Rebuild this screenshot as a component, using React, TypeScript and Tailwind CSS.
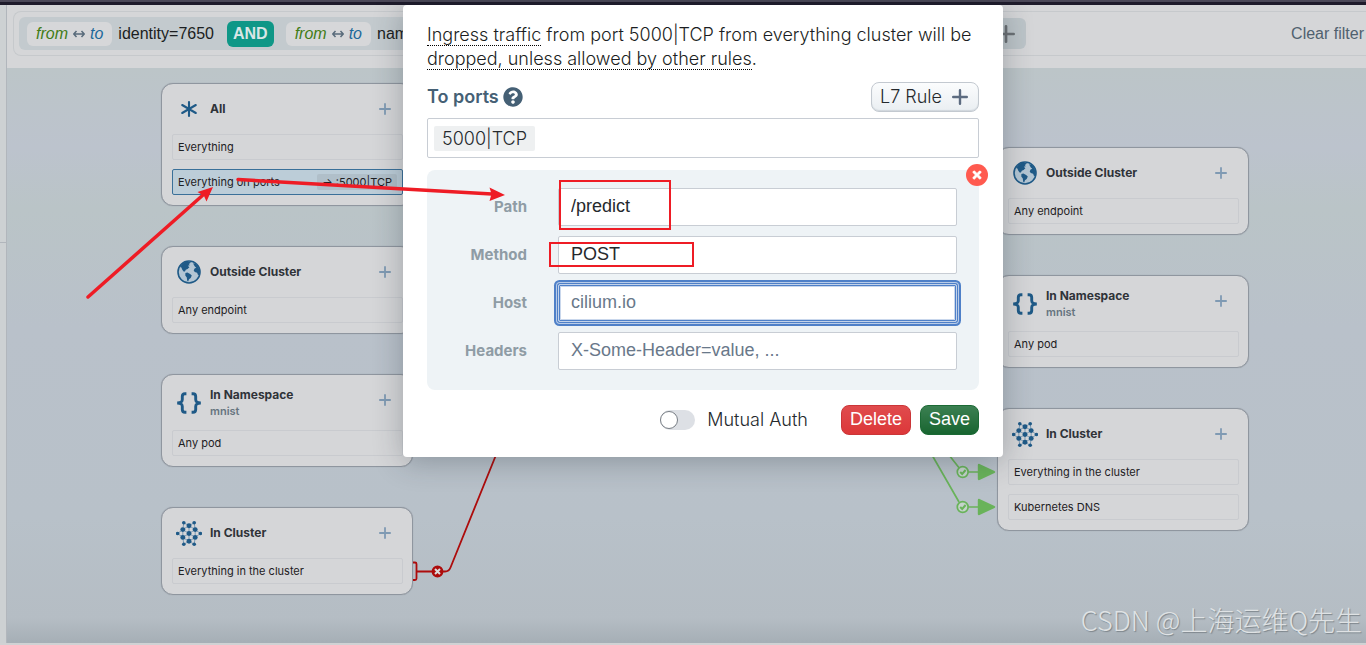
import type { ReactNode } from "react";
import { FaQuestionCircle, FaTimes } from "react-icons/fa";

const BLUE = "#1f5a87";

function Plus({ className }: { className: string }) {
  return (
    <svg viewBox="0 0 16 16" className={className} fill="none" stroke="currentColor" strokeWidth="2.4" strokeLinecap="round" aria-hidden="true">
      <path d="M8 1.2v13.6M1.2 8h13.6" />
    </svg>
  );
}

function AsteriskIcon() {
  return (
    <svg viewBox="0 0 26 26" className="size-[26px]" fill="none" stroke={BLUE} strokeWidth="2.1" strokeLinecap="round" aria-hidden="true">
      <path d="M13 6v14M6.2 9l13.6 8M19.8 9L6.2 17" />
    </svg>
  );
}

function GlobeIcon() {
  return (
    <svg viewBox="0 0 24 24" className="size-6" aria-hidden="true">
      <circle cx="12" cy="12" r="11" fill="#b3c6d4" stroke={BLUE} strokeWidth="1.6" />
      <path
        d="M4 5.400C5.600 3.300 7.800 1.800 10.400 1.300L14 2.400l-2.200 1.500 1 1.300-2 .6 1.600 1.400-1.800 1.900-1.800.6-.9 1.700-1.300.2-1.300-1.800-.9-2.200L3 7z"
        fill={BLUE}
      />
      <path d="M8.400 13l2-.4 2.700 1.400 1.700 1.500-1.100 2.400-1.700 1.300-.8 2.200-1-.6-.4-3.200-1.500-2.200z" fill={BLUE} />
      <path d="M16 3.200l3 .9 2.400 3.100L22.800 11l-.4 3.400-1.300.8-1-2.500-2.300-.6-1.100-1.700.9-1.900 1.700-.8-1.500-1.200z" fill={BLUE} />
    </svg>
  );
}

function BracesIcon() {
  return (
    <svg viewBox="0 0 26 26" className="size-[26px]" fill="none" stroke={BLUE} strokeWidth="2.9" aria-hidden="true">
      <path d="M10.400 3.700H9c-2.100 0-2.700 1-2.700 2.800v3c0 2-.8 3.100-5 3.500 4.200.4 5 1.500 5 3.500v3c0 1.800.6 2.800 2.700 2.800h1.400" />
      <path d="M15.600 3.700H17c2.100 0 2.700 1 2.700 2.800v3c0 2 .8 3.100 5 3.500-4.200.4-5 1.500-5 3.500v3c0 1.800-.6 2.800-2.700 2.800h-1.400" />
    </svg>
  );
}

const hubs = [[0, 0], [0, -24], [0, 24], [-19, -12], [19, -12], [-19, 12], [19, 12]];
const tips = [[-35, 0], [35, 0], [-16, -33], [16, -33], [-16, 33], [16, 33]];

function ClusterIcon() {
  return (
    <svg viewBox="-40 -40 80 80" className="size-[27px]" aria-hidden="true">
      <path
        d="M-16-33L0-24 16-33 19-12 35 0 19 12 16 33 0 24-16 33-19 12-35 0-19-12ZM-19-12L0-24 19-12V12L0 24-19 12ZM-19-12L19 12M19-12L-19 12M0-24V24"
        fill="none"
        stroke="#7797b2"
        strokeWidth="3"
      />
      {hubs.map(([x, y]) => <circle key={`${x},${y}`} cx={x} cy={y} r="7.600" fill={BLUE} />)}
      {tips.map(([x, y]) => <circle key={`${x},${y}`} cx={x} cy={y} r="5.600" fill={BLUE} />)}
    </svg>
  );
}

type CardProps = { icon: ReactNode; title: string; subtitle?: string; children: ReactNode };

function Card({ icon, title, subtitle, children }: CardProps) {
  return (
    <section className="rounded-xl border border-[#8f969f] bg-[#d5d6d8] pr-[9px] pb-[10px] pl-[10px] shadow-[0_0_1px_#8f969f]">
      <header className={`flex items-center pr-3 pl-1 ${subtitle ? "h-[55px]" : "h-[50px]"}`}>
        <span className="flex w-[26px] justify-center">{icon}</span>
        <div className="ml-2 flex-1">
          <h2 className="text-xs leading-4 font-bold text-[#2f3338]">{title}</h2>
          {subtitle && <p className="text-[11px] leading-4 font-semibold text-[#66747f]">{subtitle}</p>}
        </div>
        <button type="button" aria-label={`Add rule: ${title}`} className="flex h-[50px] items-center self-start text-[#7f9ab3]">
          <Plus className="size-3" />
        </button>
      </header>
      <div className="flex flex-col gap-[9px]">{children}</div>
    </section>
  );
}

function Row({ label, port }: { label: string; port?: string }) {
  return (
    <div
      className={`flex h-[26px] items-center justify-between rounded-xs border px-[5px] text-[11px] text-[#1d2023] ${
        port ? "border-[#3a7099] bg-[#bccdd8]" : "border-[#c9cbcf]"
      }`}
    >
      <span>{label}</span>
      {port && <span className="rounded-xs bg-[#b0bfc9] px-[5px] leading-4">{port}</span>}
    </div>
  );
}

function Direction() {
  return (
    <span className="flex h-6 items-center gap-[5px] rounded-md bg-[#d6d7d9] px-[9px] italic">
      <span className="text-[#427d17]">from</span>
      <svg viewBox="0 0 12 8" className="w-3" fill="none" stroke="#586b7b" strokeWidth="1.500" aria-hidden="true">
        <path d="M3.500 1L.8 4l2.700 3M8.500 1l2.700 3-2.700 3M1 4h10" />
      </svg>
      <span className="text-[#1c6899]">to</span>
    </span>
  );
}

function FilterBar() {
  return (
    <div className="h-[63px] bg-[#d5d6d8] py-[6px] pl-[6px] font-['Liberation_Sans',Arial,sans-serif] text-base text-[#1b1e21]">
      <div className="flex h-[45px] items-center rounded-l-lg border border-r-0 border-[#c6c9cc] pl-[5px] whitespace-nowrap">
        <div className="flex h-[33px] w-[956px] items-center rounded-md bg-[#c3cace] pl-2">
          <Direction />
          <span className="mr-[13px] ml-[6px]">identity=7650</span>
          <span className="mr-3 rounded-md bg-[#0f9787] px-[6px] leading-[26px] font-bold text-[#d9e6e6]">AND</span>
          <Direction />
          <span className="ml-[6px]">nam</span>
        </div>
        <button type="button" aria-label="Add filter" className="ml-[10px] flex h-[31px] w-[41px] items-center justify-center rounded-md bg-[#bdc5c9] text-[#6c7175]">
          <Plus className="size-[18px]" />
        </button>
        <a href="#clear" className="ml-auto pr-[2px] text-[#50616f]">Clear filter</a>
      </div>
    </div>
  );
}

function Links() {
  return (
    <svg className="absolute top-0 left-0 h-[575px] w-full" fill="none" aria-hidden="true">
      <g transform="translate(-7 -68)">
        <g stroke="#ad0c0c" strokeWidth="1.800">
          <path d="M413 562.500h2q1.500 0 1.500 1.500v14.500q0 1.500-1.500 1.500H413M417 571.500h28q4 0 5.500-4L496 455" />
          <circle cx="437.500" cy="571.500" r="5" fill="#ad0c0c" />
          <path d="M435 569l5 5M440 569l-5 5" stroke="#dcdcdc" strokeWidth="2" />
        </g>
        <g stroke="#69b35a" strokeWidth="1.700">
          <path d="M949 455l11 14M962 472h20M932 455l27 47M962 507h20" />
          {[472, 507].map((y) => (
            <g key={y}>
              <circle cx="962.700" cy={y} r="5.400" fill="#c5d3cb" strokeWidth="1.700" />
              <path d={`M960.200 ${y}l2 2 3.400-4`} strokeWidth="2" />
              <path d={`M979 ${y - 7}L994 ${y}l-15 7z`} fill="#69b35a" strokeWidth="2.400" strokeLinejoin="round" />
            </g>
          ))}
        </g>
      </g>
    </svg>
  );
}

function PolicyMap() {
  return (
    <main className="relative flex min-h-[575px] items-start gap-[584px] overflow-hidden bg-[linear-gradient(180deg,#bcc5c8_0,#bcc3cd_80px,#bac4c7_140px,#b9c1ca_260px,#b8c1c9_450px,#b5bdc4_550px,#a6afb6_574px)] pt-[15px] pl-[154px]">
      <div className="flex w-[252px] shrink-0 flex-col gap-10">
        <Card icon={<AsteriskIcon />} title="All">
          <Row label="Everything" />
          <Row label="Everything on ports" port="→ :5000|TCP" />
        </Card>
        <Card icon={<GlobeIcon />} title="Outside Cluster">
          <Row label="Any endpoint" />
        </Card>
        <Card icon={<BracesIcon />} title="In Namespace" subtitle="mnist">
          <Row label="Any pod" />
        </Card>
        <Card icon={<ClusterIcon />} title="In Cluster">
          <Row label="Everything in the cluster" />
        </Card>
      </div>
      <div className="flex w-[252px] shrink-0 flex-col gap-10 pt-16">
        <Card icon={<GlobeIcon />} title="Outside Cluster">
          <Row label="Any endpoint" />
        </Card>
        <Card icon={<BracesIcon />} title="In Namespace" subtitle="mnist">
          <Row label="Any pod" />
        </Card>
        <Card icon={<ClusterIcon />} title="In Cluster">
          <Row label="Everything in the cluster" />
          <Row label="Kubernetes DNS" />
        </Card>
      </div>
      <Links />
    </main>
  );
}

type FieldProps = { id: string; label: string; value?: string; placeholder?: string; active?: boolean };

function Field({ id, label, value, placeholder, active }: FieldProps) {
  return (
    <div className="flex items-center">
      <label htmlFor={id} className="w-[100px] text-right text-[15px] font-bold text-[#8f9ca5]">
        {label}
      </label>
      <input
        id={id}
        type="text"
        defaultValue={value}
        placeholder={placeholder}
        className={`ml-[31px] h-[38px] min-w-0 flex-1 rounded-xs border bg-white px-3 pb-[2px] font-['Liberation_Sans',Arial,sans-serif] text-lg text-[#25292d] outline-none placeholder:text-[#69788a] ${
          active
            ? "border-[#c3d3ea] shadow-[0_0_0_1px_#4f80c8,0_0_0_2px_#b9cce8,0_0_0_4px_#4f80c8,inset_0_0_0_1px_#4f80c8,inset_0_0_0_2px_#c9d7ec]"
            : "border-[#c8cdd4]"
        }`}
      />
    </div>
  );
}

function RuleDialog() {
  return (
    <div className="absolute inset-x-0 top-[5px] flex justify-center pl-10">
      <div role="dialog" aria-label="Edit rule" className="w-[600px] rounded-sm bg-white px-6 pt-[18px] pb-[22px] text-lg shadow-[0_4px_30px_rgba(30,40,50,0.3)]">
        <p className="leading-6 font-light text-[#1b1e22]">
          <span className="border-b border-dotted border-black">Ingress traffic</span> from port 5000|TCP from everything cluster will be{" "}
          <span className="border-b border-dotted border-black">dropped, unless allowed by other rules</span>.
        </p>
        <div className="mt-[11px] flex items-center justify-between">
          <h3 className="flex items-center gap-1 font-semibold text-[#456075]">
            To ports <FaQuestionCircle className="size-5" aria-hidden="true" />
          </h3>
          <button type="button" className="flex h-[30px] items-center gap-[10px] rounded-lg border border-[#c3c9d0] bg-linear-to-b from-[#fbfcfd] to-[#eaeef2] pr-[10px] pl-2 font-light text-[#25292d] shadow-[inset_0_-1px_1px_rgba(60,80,100,0.15)]">
            L7 Rule <Plus className="size-4 text-[#5c6b80]" />
          </button>
        </div>
        <div className="mt-[6px] flex h-10 items-center rounded-xs border border-[#c8cdd4] px-[6px] font-light text-[#25292d]">
          <span className="rounded-xs bg-[#eef0f1] px-2 leading-[25px]">5000|TCP</span>
        </div>
        <div className="relative mt-3 flex flex-col gap-[10px] rounded-lg bg-[#eef3f6] pt-[18px] pr-[22px] pb-5">
          <Field id="path" label="Path" value="/predict" />
          <Field id="method" label="Method" value="POST" />
          <Field id="host" label="Host" placeholder="cilium.io" active />
          <Field id="headers" label="Headers" placeholder="X-Some-Header=value, ..." />
          <button type="button" aria-label="Remove L7 rule" className="absolute -top-[6px] -right-[9px] flex size-[22px] items-center justify-center rounded-full bg-[#ff5a4f] text-white">
            <FaTimes className="size-3" stroke="white" strokeWidth="30" />
          </button>
        </div>
        <div className="mt-[15px] flex items-center justify-end">
          <label className="flex items-center font-light text-[#25292d]">
            <input type="checkbox" role="switch" className="peer sr-only" />
            <span className="mr-3 flex h-5 w-[35px] items-center rounded-full bg-[#dde0e5]">
              <span className="size-[18px] rounded-full border border-[#777d84] bg-white" />
            </span>
            Mutual Auth
          </label>
          <button type="button" className="ml-[33px] h-[30px] rounded-lg border border-[#cb3638] bg-linear-to-b from-[#e04b4d] to-[#dc3739] px-2 pb-[2px] font-['Liberation_Sans',Arial,sans-serif] leading-6 text-white">
            Delete
          </button>
          <button type="button" className="ml-[9px] h-[30px] rounded-lg border border-[#1c6a35] bg-linear-to-b from-[#3b8052] to-[#176530] px-2 pb-[2px] font-['Liberation_Sans',Arial,sans-serif] leading-6 text-white">
            Save
          </button>
        </div>
      </div>
    </div>
  );
}

function Annotations() {
  return (
    <svg className="pointer-events-none absolute top-0 left-0 h-[645px] w-full" fill="none" stroke="#ee1c25" strokeLinecap="round" aria-hidden="true">
      <path d="M88 297L203 195M238 179.500L492 194" strokeWidth="3.500" />
      <path d="M213 187L206.500 201.500 204 196 197.500 192zM505 195L489.500 201 491.500 194 489.500 187.500z" fill="#ee1c25" stroke="none" />
      <path d="M560 181h110v48H560zM550 243h143v23H550z" strokeWidth="2" strokeLinecap="butt" />
    </svg>
  );
}

export default function App() {
  return (
    <div className="relative min-h-screen overflow-hidden bg-[#d0d2d4] font-[Inter,sans-serif]">
      <div className="h-[5px] border-t-2 border-[#4b4858] bg-[#1e1b2b]" />
      <div className="flex">
        <aside className="w-[7px] shrink-0 border-r border-[#b1b6bc] bg-[#cdd1d3]">
          <div className="h-[238px] border-b border-[#b1b6bc]" />
        </aside>
        <div className="min-w-0 flex-1">
          <FilterBar />
          <PolicyMap />
        </div>
      </div>
      <RuleDialog />
      <Annotations />
      <p className="absolute right-1 bottom-[9px] font-['Noto_Sans_CJK_SC',sans-serif] text-[27px] leading-8 font-light whitespace-nowrap text-[#dfe2e4] [text-shadow:1px_1px_1px_#7d858b]">
        CSDN @上海运维Q先生
      </p>
    </div>
  );
}
